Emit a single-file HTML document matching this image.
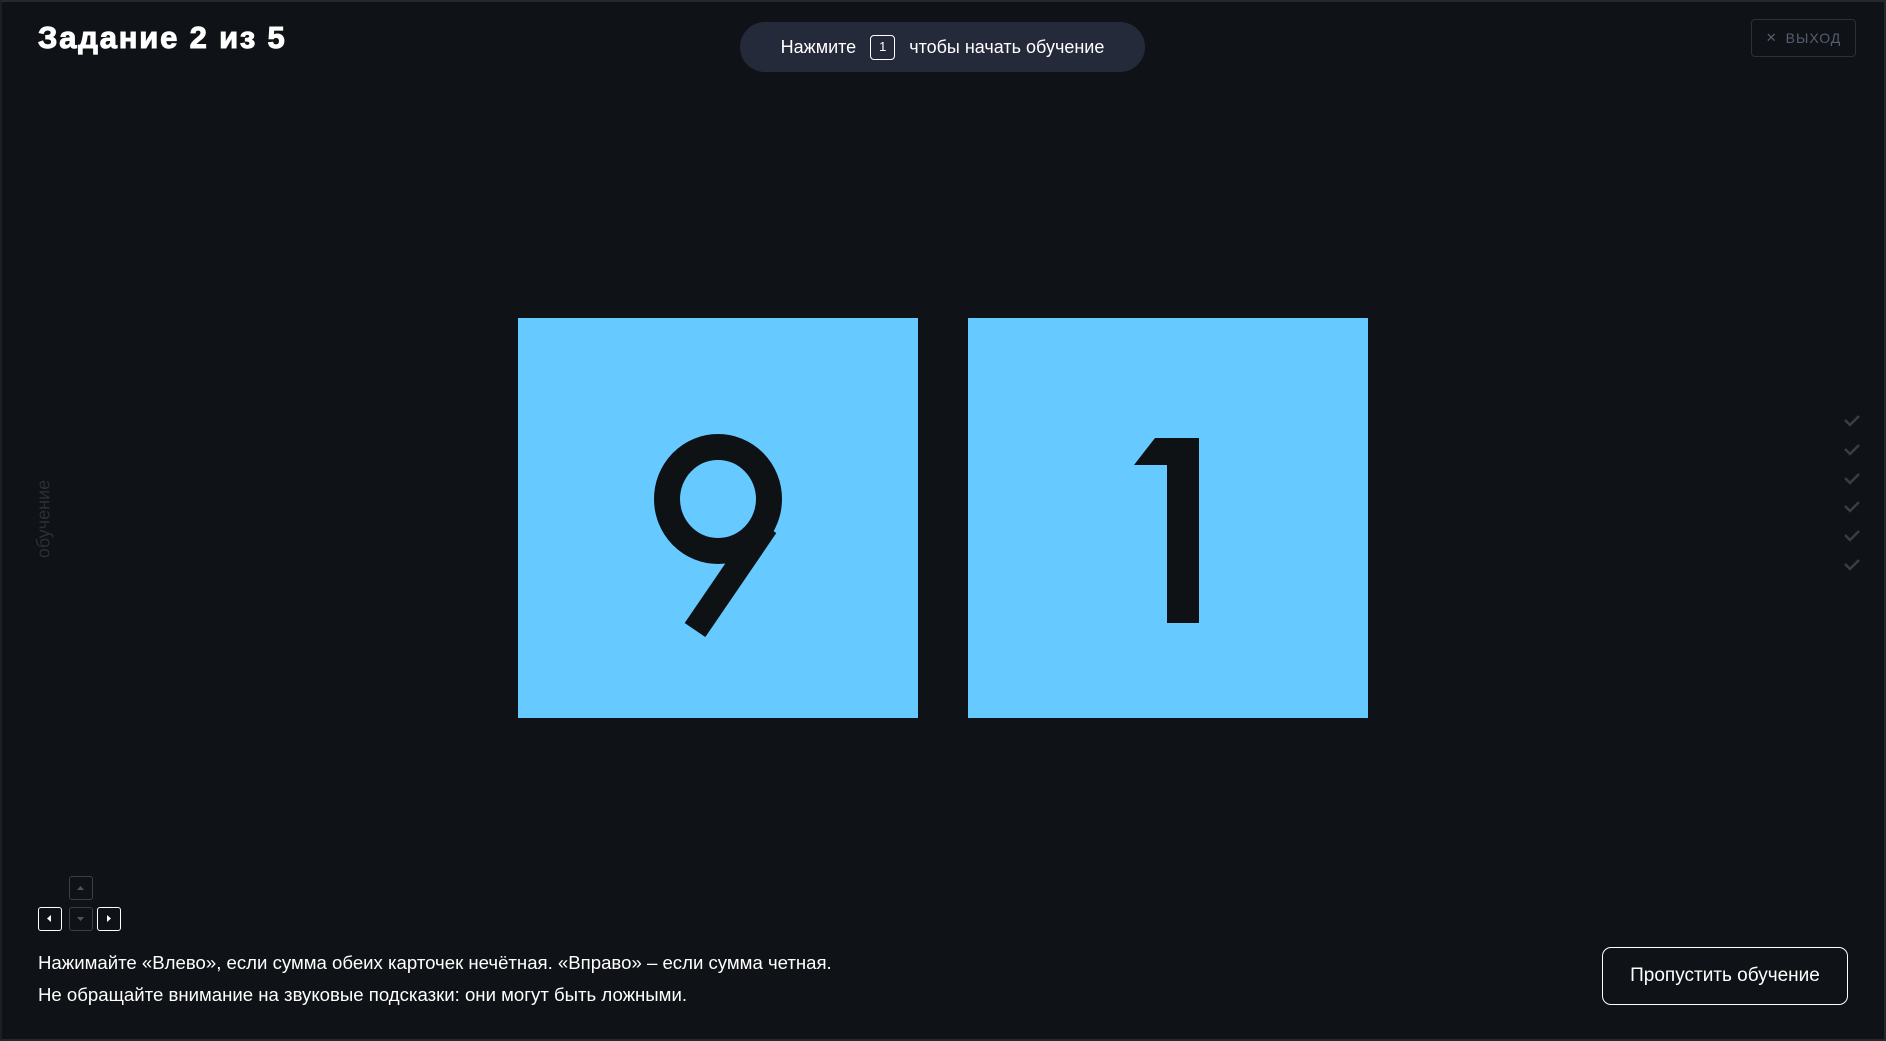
<!DOCTYPE html>
<html><head><meta charset="utf-8"><style>
*{margin:0;padding:0;box-sizing:border-box}
html,body{width:1886px;height:1041px;background:#0f1216;overflow:hidden;font-family:"Liberation Sans","DejaVu Sans",sans-serif;color:#fff}
.frame{position:absolute;left:0;top:0;width:1886px;height:1041px;border:2px solid #24282f;border-left:2px solid #1c2026}
.title{position:absolute;left:38px;top:20px;font-size:31px;font-weight:900;letter-spacing:1.8px;-webkit-text-stroke:1px #fff}
.pill{position:absolute;left:740px;top:22px;width:405px;height:50px;border-radius:25px;background:#252a3b;font-size:18px;display:flex;align-items:center;justify-content:center;gap:0}
.key{display:inline-block;width:25px;height:25px;border:1.5px solid #fff;border-radius:4px;font-size:13px;text-align:center;line-height:22px;margin:0 14px}
.exit{position:absolute;left:1751px;top:19px;width:105px;height:38px;border:1px solid #2b303c;border-radius:4px;color:#565d6e;font-size:14px;display:flex;align-items:center;justify-content:center;gap:8px;letter-spacing:1px}
.card{position:absolute;top:318px;width:400px;height:400px;background:#66c9ff}
.side{position:absolute;left:44px;top:519px;transform:translate(-50%,-50%) rotate(-90deg);color:#2a2f38;font-size:18px;white-space:nowrap}
.k{position:absolute;width:24px;height:24px;border-radius:3px;border:1.5px solid #fff}
.k.d{border-color:#3b3f47}
.txt{position:absolute;left:38px;font-size:18.6px;color:#fff}
.skip{position:absolute;left:1602px;top:947px;width:246px;height:58px;border:1.5px solid #fff;border-radius:9px;font-size:19px;display:flex;align-items:center;justify-content:center}
</style></head><body>
<div class="frame"></div>
<div class="title">Задание 2 из 5</div>
<div class="pill">Нажмите<span class="key">1</span>чтобы начать обучение</div>
<div class="exit"><span style="font-size:13px">✕</span>ВЫХОД</div>
<div class="card" style="left:518px"></div>
<div class="card" style="left:968px"></div>
<svg style="position:absolute;left:0;top:0" width="1886" height="1041">
<ellipse cx="718" cy="499" rx="51" ry="52" fill="none" stroke="#0e1215" stroke-width="26"/>
<path d="M766 526 L695 630" stroke="#0e1215" stroke-width="25" fill="none"/>
<polygon points="1155,438 1199,438 1199,623 1167,623 1167,465 1134,465" fill="#0e1215"/>
<g fill="none" stroke="#3a3e44" stroke-width="2.5">
<path d="M1845 420 l5 5 l9 -9"/><path d="M1845 449 l5 5 l9 -9"/><path d="M1845 478 l5 5 l9 -9"/>
<path d="M1845 506 l5 5 l9 -9"/><path d="M1845 535 l5 5 l9 -9"/><path d="M1845 564 l5 5 l9 -9"/>
</g>
</svg>
<div class="side">обучение</div>
<div class="k d" style="left:69px;top:876px"><svg width="21" height="21"><path d="M7 13 L10.5 9 L14 13Z" fill="#555"/></svg></div>
<div class="k" style="left:38px;top:907px"><svg width="21" height="21"><path d="M12 7 L8 10.5 L12 14Z" fill="#fff"/></svg></div>
<div class="k d" style="left:69px;top:907px"><svg width="21" height="21"><path d="M7 9 L10.5 13 L14 9Z" fill="#555"/></svg></div>
<div class="k" style="left:97px;top:907px"><svg width="21" height="21"><path d="M9 7 L13 10.5 L9 14Z" fill="#fff"/></svg></div>
<div class="txt" style="top:952px">Нажимайте «Влево», если сумма обеих карточек нечётная. «Вправо» – если сумма четная.</div>
<div class="txt" style="top:984px">Не обращайте внимание на звуковые подсказки: они могут быть ложными.</div>
<div class="skip">Пропустить обучение</div>
</body></html>
